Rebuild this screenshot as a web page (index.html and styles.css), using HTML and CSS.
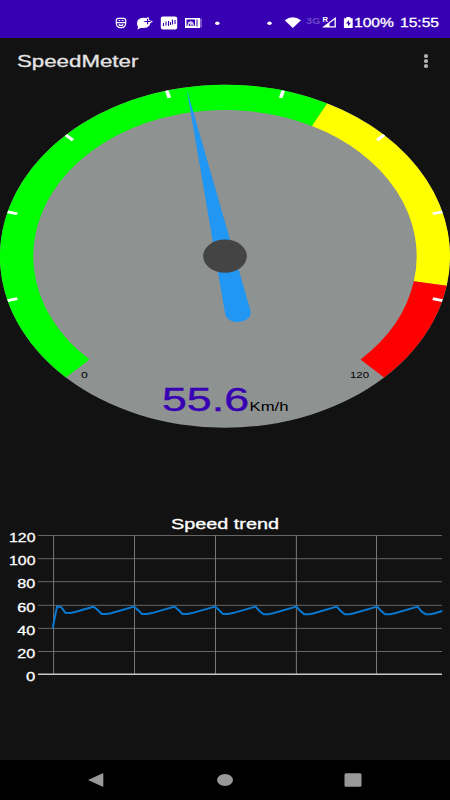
FILE: index.html
```html
<!DOCTYPE html>
<html lang="en">
<head>
  <meta charset="UTF-8" />
  <meta name="viewport" content="width=device-width, initial-scale=1.0"/>
  <title>SpeedMeter</title>
  <link rel="stylesheet" href="styles.css">
</head>
<body>

  <div class="status-bar">
    <!-- notifications -->
    <svg class="notifications" width="170" height="20" viewBox="110 13 170 20">
      <g fill="none" stroke="#fff" stroke-width="1.200">
        <path d="M118.500 18.400h5q2.200 0 2.200 2v2.600q0 4.700-4.700 4.700t-4.700-4.700v-2.600q0-2 2.200-2z"/>
        <path d="M116 22.700h10M118.500 20.500h1.800M121.800 20.500h1.800M118.700 24.500q2.300 2 4.600 0"/>
      </g>
      <path d="M137 23.300q0-5.500 7-5.500 1.500 0 2.500.5v-.8h2.500v2.500l4 1.500-2.500 1.500-1 2.500q-2 2.500-6 2.500h-3l-3 1.500.5-2.500q-1-1.500-1-3.700z" fill="#fff"/>
      <path d="M147.600 18.800v5.400M144.300 21.500h6.500" stroke="#3700b3" stroke-width="1.200"/>
      <rect x="160.800" y="16.500" width="16.400" height="13" rx="2" fill="#fff"/>
      <path d="M163.500 23v3M166 21.500v4M168.500 21v5M170.500 22v3M172.500 19.500v5M175 20v4" stroke="#3700b3" stroke-width="1.100"/>
      <path d="M185 18h15v10h-15z" fill="#fff"/>
      <path d="M200.500 18.500h1v9h-1z" fill="#b9a4e4"/>
      <path d="M186.500 19.500h8.500v6.500h-8.500zM196.500 19.500h1v7h-1z" fill="#3700b3"/>
      <path d="M187 26l1-3.500 2.500-1.500 2.500 1 1.500 4z" fill="#cfc2ee"/>
      <path d="M189.500 26v-2M192 26v-1.500" stroke="#3700b3"/>
      <ellipse cx="217.300" cy="23.200" rx="2.200" ry="1.700" fill="#fff"/>
      <ellipse cx="269.500" cy="23.200" rx="2.200" ry="1.700" fill="#fff"/>
    </svg>

    <!-- wifi, network, battery -->
    <svg class="system" width="74" height="20" viewBox="280 13 74 20">
      <path d="M284.700 20.200q8-6 16.300 0L292.800 28z" fill="#fff"/>
      <text x="306" y="24.200" font-size="9" font-weight="700" fill="#6c47c7" textLength="14.500" lengthAdjust="spacingAndGlyphs">3G</text>
      <path d="M335.200 18.200v8.600H324z" fill="none" stroke="#fff" stroke-width="1.300"/>
      <path d="M329.500 22.500v4.500h-6z" fill="#fff"/>
      <path d="M322.500 16.500h6v5h-6z" fill="#3700b3"/>
      <text x="322.500" y="21.800" font-size="7" font-weight="700" fill="#fff" textLength="5.500" lengthAdjust="spacingAndGlyphs">R</text>
      <path d="M346.300 17h4v1.200h2q.4 0 .4.500v8.800q0 .5-.5.500h-7.800q-.5 0-.5-.5v-8.800q0-.5.5-.5h1.900z" fill="#fff"/>
      <path d="M349 20l-3 3.500h2v2.800l3-3.600h-2z" fill="#3700b3"/>
    </svg>
    <span class="battery">100%</span>
    <span class="clock">15:55</span>
  </div>

  <div class="app-bar">
    <h1>SpeedMeter</h1>
    <div class="menu"><i></i><i></i><i></i></div>
  </div>

  <svg class="gauge" width="450" height="344" viewBox="0 84 450 344">
    <!-- dial is drawn on a circle of radius 100 -->
    <g transform="translate(225 256.200) scale(2.250 1.715)">
      <circle r="100" fill="#8e9291"/>
      <g fill="none" stroke-width="14.800">
        <path stroke="#00ff00" d="M-65.480 65.480A92.600 92.600 0 0 1 42.040 -82.510"/>
        <path stroke="#ffff00" d="M42.040 -82.510A92.600 92.600 0 0 1 91.220 15.920"/>
        <path stroke="#ff0000" d="M91.220 15.920A92.600 92.600 0 0 1 65.480 65.480"/>
      </g>
      <g stroke="#fff" stroke-width="1.600">
        <path d="M95.600 0H100" transform="rotate(15)"/>
        <path d="M95.600 0H100" transform="rotate(165)"/>
        <path d="M95.600 0H100" transform="rotate(195)"/>
        <path d="M95.600 0H100" transform="rotate(225)"/>
        <path d="M95.600 0H100" transform="rotate(255)"/>
        <path d="M95.600 0H100" transform="rotate(285)"/>
        <path d="M95.600 0H100" transform="rotate(315)"/>
        <path d="M95.600 0H100" transform="rotate(345)"/>
      </g>
      <path transform="rotate(-9.900)" fill="#2196f3" d="M0 -99L-5.700 33C-5.900 40.800 5.900 40.800 5.700 33z"/>
      <circle r="9.700" fill="#444"/>
    </g>
    <text x="81" y="377.600" font-size="8.700" textLength="6.800" lengthAdjust="spacingAndGlyphs">0</text>
    <text x="350" y="377.600" font-size="8.700" textLength="19" lengthAdjust="spacingAndGlyphs">120</text>
    <text class="speed" x="162" y="411" font-size="33" textLength="87" lengthAdjust="spacingAndGlyphs">55.6</text>
    <text x="249.500" y="411" font-size="12.300" textLength="39" lengthAdjust="spacingAndGlyphs">Km/h</text>
  </svg>

  <svg class="trend" width="450" height="180" viewBox="0 510 450 180">
    <text x="171" y="529" font-size="14.700" textLength="108" lengthAdjust="spacingAndGlyphs">Speed trend</text>
    <g font-size="13">
      <text x="9" y="542" textLength="26.500" lengthAdjust="spacingAndGlyphs">120</text>
      <text x="9" y="565" textLength="26.500" lengthAdjust="spacingAndGlyphs">100</text>
      <text x="17.300" y="588.200" textLength="18" lengthAdjust="spacingAndGlyphs">80</text>
      <text x="17.300" y="611.500" textLength="18" lengthAdjust="spacingAndGlyphs">60</text>
      <text x="17.300" y="634.700" textLength="18" lengthAdjust="spacingAndGlyphs">40</text>
      <text x="17.300" y="657.700" textLength="18" lengthAdjust="spacingAndGlyphs">20</text>
      <text x="26" y="680.800" textLength="9.300" lengthAdjust="spacingAndGlyphs">0</text>
    </g>
    <path class="grid" d="M38 535.500H442M38 558.700H442M38 581.700H442M38 605.300H442M38 628.400H442M38 651.500H442"/>
    <path class="grid-v" d="M53.600 535V674M134.500 535V674M215.500 535V674M296.400 535V674M376.500 535V674"/>
    <path class="axis" d="M38 674.200H442"/>
    <polyline class="line" points="52.700,627.700 57,606.500 61,607 65.300,612.700 70.500,612.900 75,612 93.500,606.700 97.500,609.800 101.500,614 106.500,614 111,613.200 134,606.600 138,610 142,614.100 147,614.100 152,613.100 174.500,606.600 178.500,610 182.500,614.100 187.500,614.100 192,613.100 215,606.600 219,610 223,614.100 228,614.100 233,613.100 255.500,606.600 259.500,611 263.500,614.200 268.500,614.200 273,613.300 296.300,606.600 300.300,611 304.300,614.200 309.300,614.200 314,613.300 336.700,606.600 340.700,611 344.700,614.200 349.700,614.200 354,613.300 377.200,606.600 381.200,611 385.200,614.200 390.200,614.200 395,613.300 417.700,606.600 421.700,611.700 425.700,614.200 430.700,614.200 435,613.200 442.300,611"/>
  </svg>

  <div class="nav-bar">
    <svg width="18" height="16" viewBox="0 0 18 16"><path d="M1 8L15.800 1.200q.5 0 .5.500v12.800q0 .5-.5.300z"/></svg>
    <svg width="18" height="16" viewBox="0 0 18 16"><ellipse cx="9" cy="8" rx="8" ry="6.100"/></svg>
    <svg width="18" height="16" viewBox="0 0 18 16"><rect x=".5" y="1.300" width="17" height="13.500" rx="1.500"/></svg>
  </div>

</body>
</html>
```
FILE: styles.css
```css
body {
  margin: 0;
  height: 800px;
  display: flex;
  flex-direction: column;
  background-color: #121212;
  color: #fff;
  font-family: "Liberation Sans", Arial, sans-serif;
  overflow: hidden;
}

svg {
  display: block;
  flex: none;
}

.status-bar {
  display: flex;
  height: 38px;
  box-sizing: border-box;
  padding: 13px 0 0 110px;
  background-color: #3700b3;
  font-size: 12px;
  line-height: 20px;
}

.battery,
.clock {
  flex: none;
  width: 45.500px;
  transform: scaleX(1.300);
  transform-origin: left;
  -webkit-text-stroke: 0.300px #fff;
}

.app-bar {
  display: flex;
  justify-content: space-between;
  align-items: center;
  height: 46px;
  padding: 0 22px 0 17px;
}

h1 {
  margin: 2px 0 0;
  font-size: 17px;
  font-weight: normal;
  color: #e4e4e4;
  transform: scaleX(1.310);
  transform-origin: left;
  -webkit-text-stroke: 0.300px #e4e4e4;
}

.menu {
  display: flex;
  flex-direction: column;
  gap: 1.700px;
}

.menu i {
  width: 4.400px;
  height: 3.300px;
  border-radius: 50%;
  background-color: #b0b0b0;
}

.speed {
  fill: #3700b3;
  stroke: #3700b3;
  stroke-width: 0.400;
}

.trend {
  margin-top: 82px;
  fill: #fff;
}

.trend text {
  stroke: #fff;
  stroke-width: 0.300;
}

.grid,
.grid-v {
  fill: none;
  stroke: #666;
}

.grid-v {
  stroke: #777;
}

.axis {
  stroke: #c8c8c8;
  stroke-width: 1.400;
}

.line {
  fill: none;
  stroke: #0878d0;
  stroke-width: 2;
}

.nav-bar {
  display: flex;
  justify-content: space-between;
  align-items: center;
  height: 40px;
  margin-top: auto;
  padding: 0 88px 0 87px;
  background-color: #000;
  fill: #999;
}
```
